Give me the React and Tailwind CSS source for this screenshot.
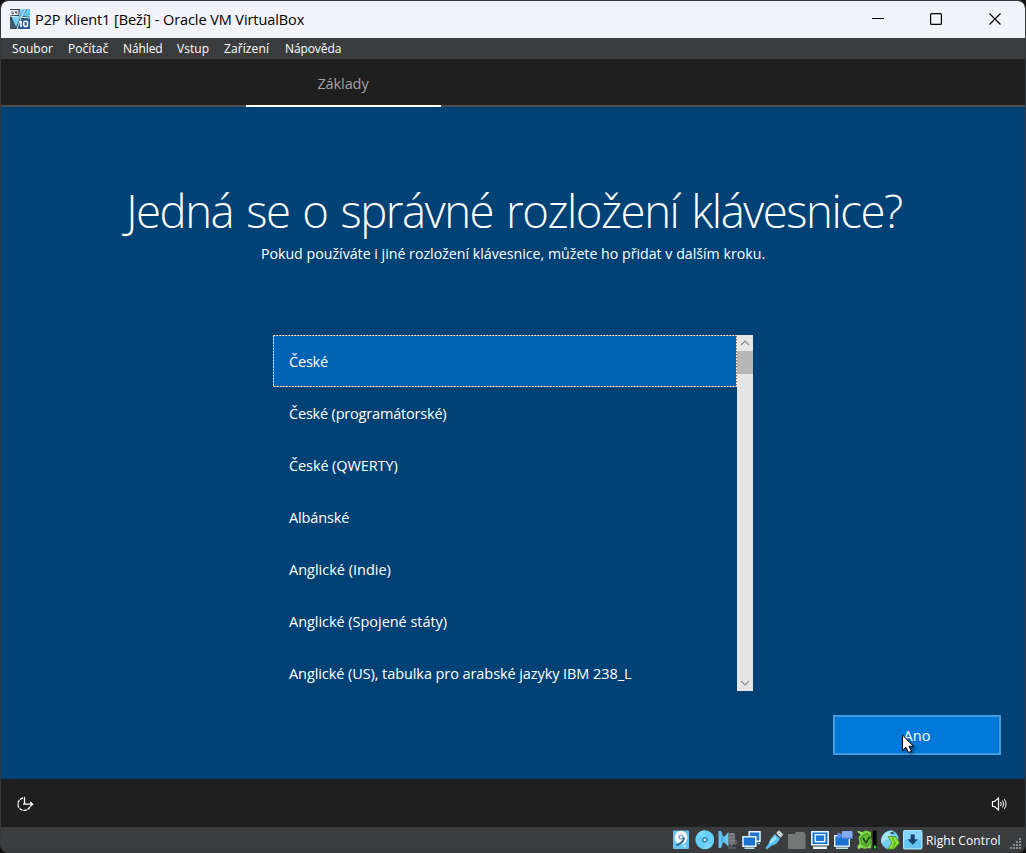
import React from "react";

const layouts = [
  ["České", "tracking-[-0.2px]"],
  ["České (programátorské)", "tracking-[-0.19px]"],
  ["České (QWERTY)", "tracking-[-0.1px]"],
  ["Albánské", "tracking-[-0.15px]"],
  ["Anglické (Indie)", "tracking-[0px]"],
  ["Anglické (Spojené státy)", "tracking-[-0.04px]"],
  ["Anglické (US), tabulka pro arabské jazyky IBM 238_L", "tracking-[-0.08px]"],
];

const menus = [
  ["Soubor", "w-[56px] tracking-[0.05px]"],
  ["Počítač", "w-[55px] tracking-[0.05px]"],
  ["Náhled", "w-[54px] tracking-[-0.1px]"],
  ["Vstup", "w-[47px] tracking-[0.05px]"],
  ["Zařízení", "w-[61px] tracking-[0.1px]"],
  ["Nápověda", "w-[60px] tracking-[-0.1px]"],
];

function AppIcon() {
  return (
    <svg width="20" height="20" viewBox="0 0 20 20">
      <defs>
        <linearGradient id="app" x1="0" y1="0" x2="1" y2="1">
          <stop offset="0" stopColor="#a5e2f7" />
          <stop offset="1" stopColor="#2d94d6" />
        </linearGradient>
      </defs>
      <rect width="20" height="20" fill="#31465c" />
      <path d="M1 7l9 1-2 6-2 4z" fill="#74ccf0" />
      <path d="M0 9l7 10H0z" fill="#44596c" />
      <path d="M10 0h6l-4 8-3-1z" fill="url(#app)" />
      <path d="M17 0h3v8l-7-1z" fill="#65c6f1" />
      <path d="M11 10l9-1v11H8z" fill="#285b96" />
      <path d="M16 0l-5 9-4 11M0 7l20 2" stroke="#d9f3fb" strokeWidth="1" fill="none" />
      <rect x="0" y="1" width="8.5" height="5" fill="#e8edef" />
      <path d="M2 2v3h1.3V3.5M5.3 2v1.7h1.6m0-1.7v3" stroke="#40464c" strokeWidth=".8" fill="none" />
      <path d="M9.5 12.8H11V18" fill="none" stroke="#fff" strokeWidth="1.6" />
      <rect x="13.8" y="12.2" width="3.7" height="5.2" rx="1.5" fill="none" stroke="#fff" strokeWidth="1.5" />
    </svg>
  );
}

const statusIcons = [
  <g key="hdd">
    <rect x="2" y="0.5" width="16" height="18.5" rx="1" fill="#62c3f4" />
    <ellipse cx="10" cy="7.6" rx="6.3" ry="6.8" fill="#f5f9fb" />
    <circle cx="10" cy="7" r="2.6" fill="#7ba9c9" />
    <circle cx="10" cy="7" r="1.2" fill="#f5f9fb" />
    <path d="M13 7.5c0 4-2.5 5-7.5 8" fill="none" stroke="#36648b" strokeWidth="1.9" />
    <path d="M12 15l4 1-3 1.5z" fill="#dff7ff" />
  </g>,
  <g key="disc">
    <circle cx="10.8" cy="9.8" r="9.5" fill="#66cff8" />
    <path d="M4.1 3.5a9.5 9.5 0 0 1 6.7-3.2v9.5zM17.5 16.3a9.5 9.5 0 0 1-6.7 3V9.8z" fill="#7bd8fb" />
    <circle cx="10.8" cy="9.8" r="2.8" fill="#2d7fb5" />
    <circle cx="10.8" cy="9.8" r="1.4" fill="#cfefff" />
  </g>,
  <g key="audio">
    <path d="M1.5 1H4l2 5.5h1.5l4-4.5v15l-4-4.500H6L4 18H1.500z" fill="#62c5f2" />
    <path d="M4 6.500h2.500v6H4z" fill="#4ba9dc" />
    <rect x="11.500" y="3" width="6.500" height="11" rx="2" fill="#808385" />
    <path d="M12 6h6.500M12 9h6.500M12 12h6.500" stroke="#5b6063" strokeWidth="1" />
    <path d="M19 10v4h-7M14.500 14v3M11 18h8" fill="none" stroke="#75787a" strokeWidth="1.200" />
  </g>,
  <g key="network">
    <path d="M8.200 1.700H19v9.500H8.200z" fill="#2474ce" stroke="#e0f3ff" strokeWidth="1.500" />
    <path d="M16.500 13.500H19" stroke="#7ed5fa" strokeWidth="1.500" />
    <path d="M2 6.700h12.800v9.500H2z" fill="#1c70d0" stroke="#e0f3ff" strokeWidth="1.500" />
    <path d="M3.500 18.200h10" stroke="#bce6fa" strokeWidth="1.500" />
  </g>,
  <g key="usb">
    <path d="M12.500 3L15 .5l4 4L16.500 7.500z" fill="#e7edef" stroke="#a8b3b9" strokeWidth=".7" />
    <path d="M11 4l5 5-4 5-5 2-4 3.500L1.500 18l3-4 2-5z" fill="#59c2f5" />
    <path d="M6 13l6-6" stroke="#a0e3fd" strokeWidth="2.500" />
    <path d="M14.800 2.800l1 1M16.500 4.500l1 1" stroke="#4f575c" />
  </g>,
  <path key="folder" d="M1 4h6.500L9 2h8l1.500 2v15H1z" fill="#757777" />,
  <g key="display">
    <rect x="1" y="1" width="18" height="14.500" fill="#e4f5fd" />
    <rect x="2.500" y="2.500" width="15" height="11.500" fill="#1672cd" />
    <rect x="5.200" y="4.700" width="9.600" height="7" fill="#1c78d8" stroke="#e7f8ff" strokeWidth="1.400" />
    <path d="M3 16.500h14v2.500H3z" fill="#e4f5fd" />
  </g>,
  <g key="recording">
    <rect x="1.700" y="5.700" width="14.600" height="10.500" fill="#176fcf" stroke="#e0f3ff" strokeWidth="1.400" />
    <path d="M3 18.200h12" stroke="#c9eafa" strokeWidth="1.500" />
    <rect x="9" y="1" width="10.500" height="8" rx="1" fill="#86a9f4" />
    <path d="M4.500 2.500L9 4v3L4.500 8.500z" fill="#5b89ea" />
    <path d="M9 7.500h10.500V9H9z" fill="#5380dc" />
  </g>,
  <g key="turtle">
    <path d="M0 1l5 1 4-1.500L14 2v6l1 3-1 7-3-1-2 2-5-1-3 1.500-.5-4 2-2-1-6 2-3z" fill="#7bd044" />
    <path d="M5.500 6L10 3.500 14 7v6l-4 3.500L5 14 3.500 9z" fill="#63bc33" stroke="#377b1c" strokeWidth=".8" />
    <path d="M6 8l3 5 3.500-6" fill="none" stroke="#1c4511" strokeWidth="1.500" />
    <path d="M1 1.500l4 2M1 18l3-3M11 17l2 1" stroke="#9be765" strokeWidth="1.700" />
    <rect x="15.900" y="0.500" width="3.700" height="19" fill="#030704" />
    <rect x="16.900" y="15.500" width="2" height="3.200" fill="#16ed19" />
  </g>,
  <g key="mouse">
    <ellipse cx="9.800" cy="9.800" rx="8.500" ry="9.500" transform="rotate(25 9.800 9.800)" fill="#75cdee" />
    <path d="M1 13C.5 6 6 .5 13 .5L9.500 8z" fill="#a8e1f5" />
    <path d="M10 2.500l3-1 1.500 2-3 1z" fill="#245f86" />
    <path d="M8 6.500h7.500L19.500 13l-5.500 6H8l4-6z" fill="#8ee33f" stroke="#3f851b" strokeWidth=".7" />
    <path d="M12 7l3.500 6-3 5" fill="none" stroke="#63b528" strokeWidth="1.500" />
  </g>,
  <g key="hostkey">
    <rect x=".5" y=".5" width="18.500" height="18.500" rx="1" fill="#86d5f8" stroke="#a9e4fd" />
    <path d="M1.500 10H18v8H1.500z" fill="#65c3f0" />
    <path d="M7.700 4.500h4v4.700H15l-5.300 5.500-5.300-5.500h3.300z" fill="#143f70" />
  </g>,
];

function TitleBar() {
  return (
    <header className="flex h-[37px] shrink-0 items-center rounded-t-[7px] bg-[#f1f3f9] pl-[9px] text-black">
      <div className="-mt-px"><AppIcon /></div>
      <span className="ml-[5px] text-[14.5px] tracking-[-0.08px]">P2P Klient1 [Beží] - Oracle VM VirtualBox</span>
      <svg className="mt-[-1px] mr-[23px] ml-auto" width="130" height="14" viewBox="0 0 130 14" fill="none" stroke="#000" strokeWidth="1.200">
        <path d="M0 6.500h12" strokeWidth="1" />
        <rect x="58.600" y="1.600" width="10.800" height="10.800" rx="1" />
        <path d="M117.500 1.500l11 11m0-11l-11 11" />
      </svg>
    </header>
  );
}

function Chevron({ down }) {
  return (
    <svg width="16" height="16" viewBox="0 0 16 16" fill="none" stroke="#888" strokeWidth="1.100" className={down ? "rotate-180" : ""}>
      <path d="M4 10l4-4 4 4" />
    </svg>
  );
}

export default function App() {
  return (
    <div className="h-[853px] w-[1026px] overflow-hidden bg-[#111]">
      <div className="flex h-[853px] w-[1026px] flex-col overflow-hidden rounded-[8px] border border-[#37383a] bg-[#3b3c3e] font-['Open_Sans','Noto_Sans',sans-serif] whitespace-nowrap text-white">
        <TitleBar />
        <nav className="flex h-[21px] shrink-0 items-center bg-[#3b3c3e] pl-[11px] text-[12px]">
          {menus.map(([name, style]) => (
            <span key={name} className={style}>{name}</span>
          ))}
        </nav>
        <div className="flex h-[48px] shrink-0 border-b-2 border-[#4b4b4b] bg-[#1f1f1f] pl-[245px]">
          <div className="-mb-[2px] flex h-[48px] w-[195px] items-center justify-center border-b-2 border-white pt-[3px] pr-px text-[14.5px] tracking-[-0.1px] text-[#a2a2a2]">
            Základy
          </div>
        </div>
        <main className="flex h-[672px] shrink-0 flex-col bg-[#004275]">
          <h1 className="mt-[71px] h-[65px] pl-[2px] text-center text-[45.500px] leading-[64px] font-light tracking-[-1.450px] [word-spacing:2.500px]">
            Jedná se o správné rozložení klávesnice?
          </h1>
          <p className="h-[22px] text-center text-[14.200px] leading-[22px]">
            Pokud používáte i jiné rozložení klávesnice, můžete ho přidat v dalším kroku.
          </p>
          <div className="mt-[70px] ml-[272px] flex h-[356px] w-[480px]">
            <ul className="w-[464px]">
              {layouts.map(([name, tracking], i) => (
                <li key={name} className={"relative flex h-[52px] items-center pt-px pl-[16px] text-[14.5px] " + tracking + (i === 0 ? " bg-[#0063b1]" : "")}>
                  {i === 0 && (
                    <svg className="absolute inset-0" width="464" height="52">
                      <rect x=".5" y=".5" width="463" height="51" fill="none" stroke="#8a765f" />
                      <rect x=".5" y=".5" width="463" height="51" fill="none" stroke="#fff" strokeDasharray="1.5 1.5" />
                    </svg>
                  )}
                  {name}
                </li>
              ))}
            </ul>
            <div className="flex w-[16px] flex-col bg-[#e6e6e6]">
              <Chevron />
              <div className="h-[23px] bg-[#b8b8b8]" />
              <div className="mt-auto"><Chevron down /></div>
            </div>
          </div>
          <div className="mt-[24px] mr-[24px] flex justify-end">
            <button className="relative h-[40px] w-[168px] border-2 border-[#429ce3] bg-[#0078d7] pt-px text-[14.5px]">
              Ano
              <svg className="absolute top-[17px] left-[66px] drop-shadow-[2px_2px_1px_rgba(0,0,0,0.4)]" width="14" height="21" viewBox="0 0 14 21">
                <path d="M1.500 1v15.500l3.500-3.200L7.500 18.500l3-1.300L8 12.300h4.500z" fill="#fff" stroke="#000" />
              </svg>
            </button>
          </div>
        </main>
        <div className="flex h-[48px] shrink-0 items-center justify-between bg-[#1f1f1f] pt-[2px] pr-[18px] pl-[15px]">
          <svg width="18" height="18" viewBox="0 0 18 18" fill="none" stroke="#fff" strokeWidth="1.300">
            <path d="M7 3A6.300 6.300 0 1 0 14.300 11" strokeDasharray="3.500 .8" />
            <path d="M8.500 2v7.200H17M14.300 7l2.300 2.200-2.300 2.200M7 9.200h2" />
          </svg>
          <svg width="16" height="16" viewBox="0 0 16 16" fill="none" stroke="#fff" strokeWidth="1.200">
            <path d="M1.500 5.500h2L7.500 2v12l-4-3.500h-2z" />
            <path d="M9.500 6q1.500 2 0 4M11.500 4.500q2.500 3.500 0 7M13.300 3.200q3.500 4.800 0 9.600" strokeWidth="1" />
          </svg>
        </div>
        <footer className="flex h-[25px] shrink-0 items-center gap-[3.200px] bg-[#3b3c3e] pl-[670px]">
          {statusIcons.map((icon, i) => (
            <svg key={i} className="shrink-0" width="20" height="20" viewBox="0 0 20 20">{icon}</svg>
          ))}
          <span className="w-[76px] shrink-0 pt-[2px] text-[12px] tracking-[0.1px]">Right Control</span>
          <svg className="ml-[3px] shrink-0 self-end" width="15" height="15" viewBox="0 0 15 15" fill="#8d8e90">
            <path d="M11 1h2v2h-2zM8 4h2v2H8zM11 4h2v2h-2zM5 7h2v2H5zM8 7h2v2H8zM11 7h2v2h-2zM2 10h2v2H2zM5 10h2v2H5zM8 10h2v2H8zM11 10h2v2h-2z" />
          </svg>
        </footer>
      </div>
    </div>
  );
}
